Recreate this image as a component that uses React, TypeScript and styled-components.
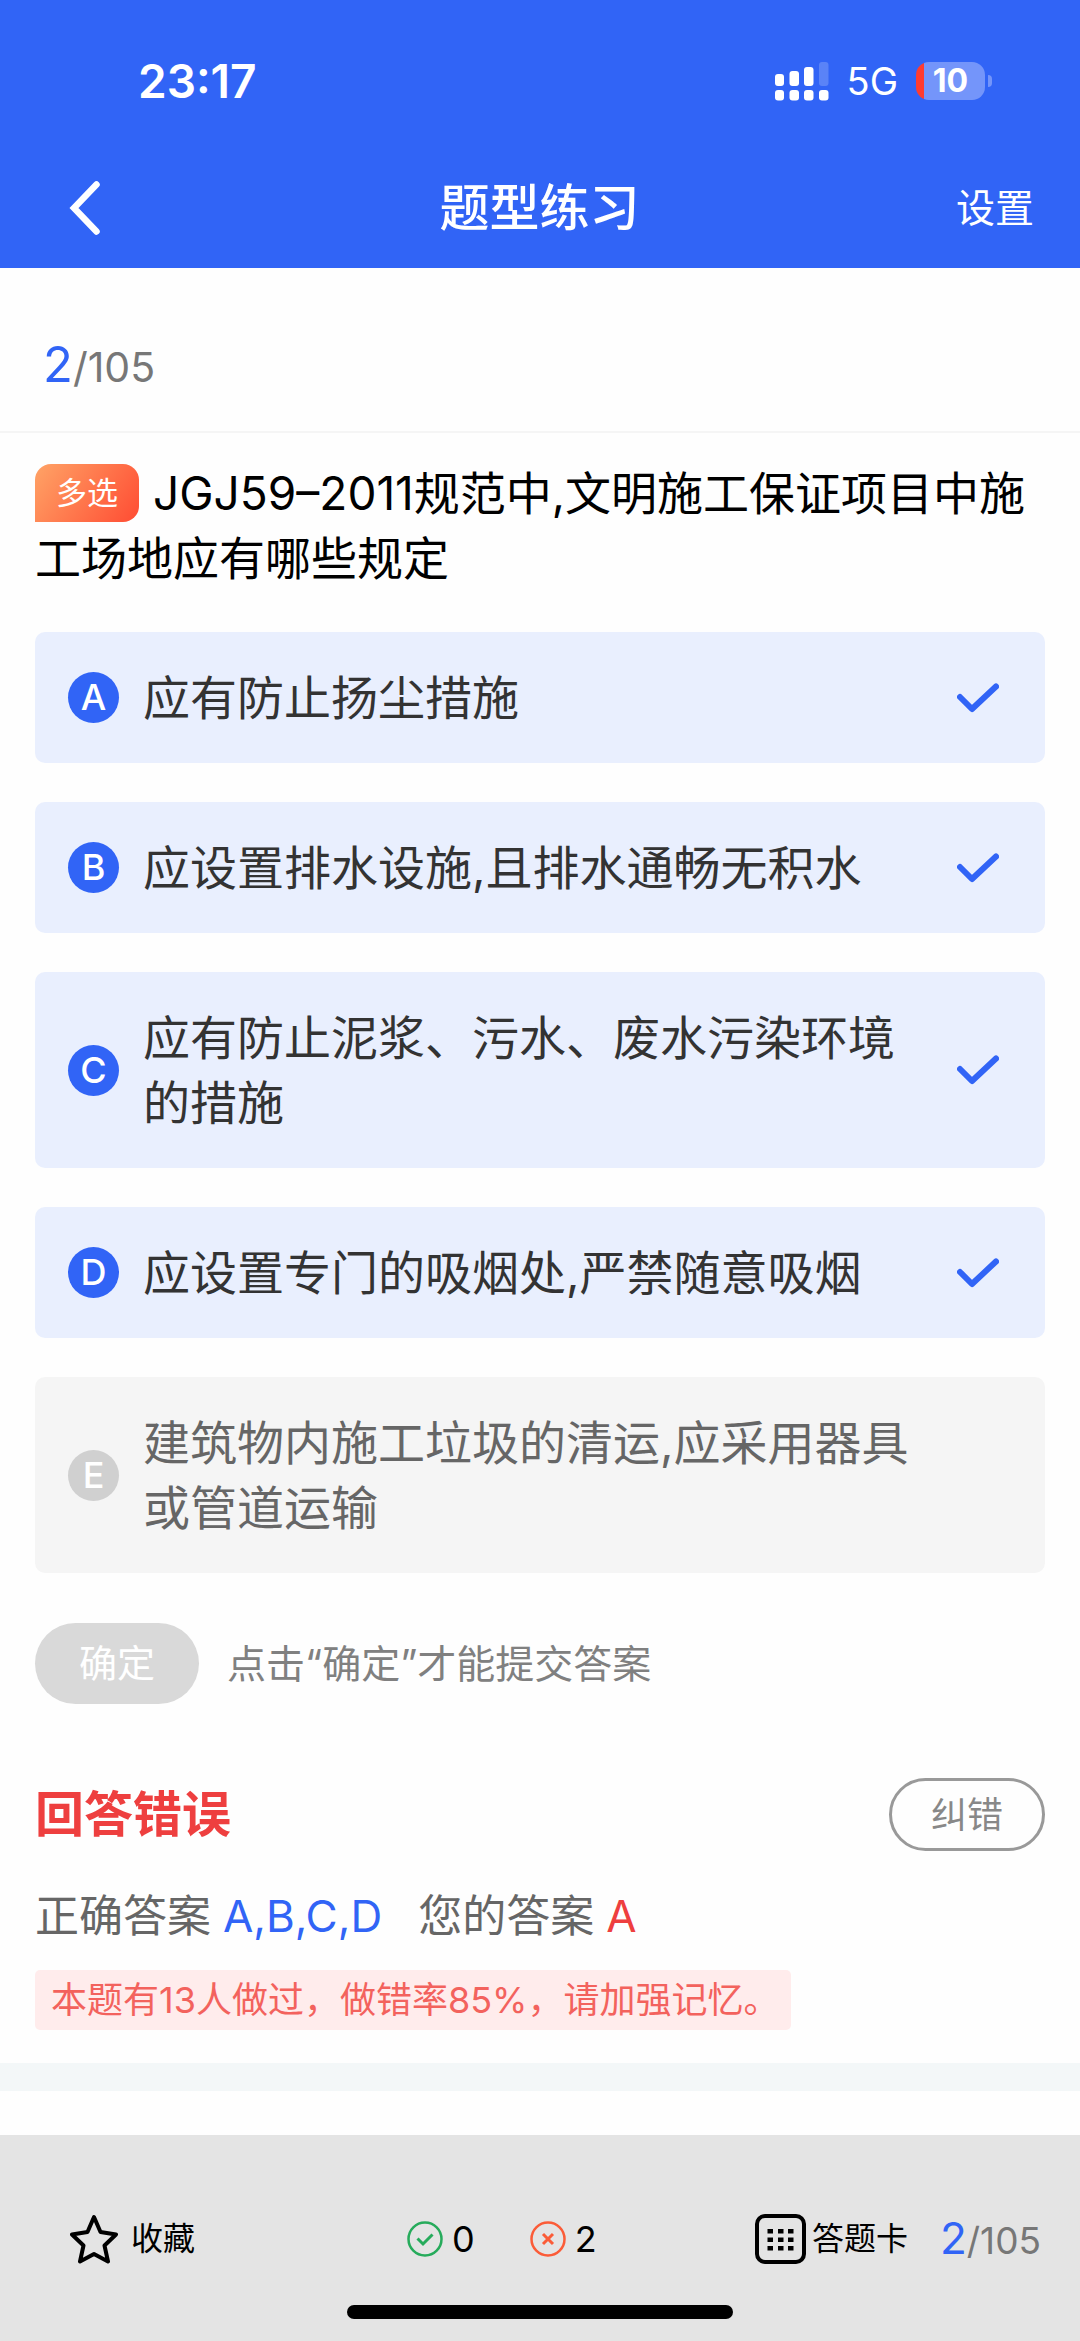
import React, { useState } from "react";
import styled, { createGlobalStyle } from "styled-components";

const sans = 'Inter, "Noto Sans CJK SC", sans-serif';
const blue = "#3164f6";

const GlobalStyle = createGlobalStyle`
  * { box-sizing: border-box; }
  body { margin: 0; background: #fefefe; font-family: ${sans}; color: #000; }
  button { margin: 0; padding: 0; border: 0; background: none; font: inherit; color: inherit; }
  h1, h2, p { margin: 0; font-weight: 400; }
  svg { display: block; flex: none; }
`;

const Screen = styled.div`
  min-height: 100vh;
  display: flex;
  flex-direction: column;
`;

const Header = styled.header`
  background: ${blue};
  color: #fff;
`;

const StatusBar = styled.div`
  height: 160px;
  padding: 2px 88px 0 138px;
  display: flex;
  align-items: center;
  justify-content: space-between;
`;

const Clock = styled.time`
  font-size: 46px;
  font-weight: 600;
  line-height: 56px;
`;

const StatusIcons = styled.div`
  display: flex;
  align-items: center;
  gap: 18px;
`;

const Network = styled.span`
  font-size: 38px;
  line-height: 46px;
`;

const BatteryWrap = styled.div`
  display: flex;
  align-items: center;
  gap: 3px;
`;

const Battery = styled.div`
  width: 69px;
  height: 38px;
  border-radius: 13px;
  background: linear-gradient(to right, #ff3b30 8px, #7495fa 8px);
  text-align: center;
  font-size: 32px;
  font-weight: 700;
  line-height: 38px;
`;

const BatteryTip = styled.div`
  width: 4px;
  height: 12px;
  border-radius: 0 4px 4px 0;
  background: #7495fa;
`;

const NavBar = styled.nav`
  height: 108px;
  padding: 0 46px 12px 69px;
  display: grid;
  grid-template-columns: 1fr auto 1fr;
  align-items: center;
`;

const BackButton = styled.button`
  justify-self: start;
`;

const Title = styled.h1`
  margin-right: 24px;
  font-size: 50px;
  font-weight: 500;
  line-height: 70px;
`;

const SettingsButton = styled.button`
  justify-self: end;
  font-size: 39px;
  line-height: 60px;
`;

const Main = styled.main`
  flex: 1;
`;

const ProgressBar = styled.div`
  height: 165px;
  padding: 32px 43px 0;
  display: flex;
  align-items: center;
  border-bottom: 2px solid #f5f5f5;
`;

const Progress = styled.span<{ $size: number }>`
  color: #777;
  font-size: ${(p) => p.$size}px;
  line-height: 60px;
  white-space: nowrap;
`;

const Current = styled.span<{ $size: number }>`
  color: ${blue};
  font-size: ${(p) => p.$size}px;
`;

const Content = styled.section`
  padding: 28px 35px 33px;
`;

const Question = styled.h2`
  font-size: 46px;
  line-height: 65px;
`;

const TypeBadge = styled.span`
  display: inline-block;
  height: 58px;
  margin: 3px 14px 0 0;
  padding: 0 21px;
  vertical-align: top;
  border-radius: 16px 16px 16px 0;
  background: linear-gradient(125deg, #ffa366, #ff4c33);
  color: #fff;
  font-size: 31px;
  line-height: 58px;
`;

const OptionList = styled.div`
  margin-top: 41px;
  display: flex;
  flex-direction: column;
  gap: 39px;
`;

const Option = styled.label<{ $on: boolean }>`
  padding: 33px 46px 33px 33px;
  display: flex;
  align-items: center;
  border-radius: 10px;
  background: ${(p) => (p.$on ? "#e9effe" : "#f5f5f5")};
  color: ${(p) => (p.$on ? "#333" : "#666")};
`;

const HiddenCheck = styled.input`
  position: absolute;
  width: 1px;
  height: 1px;
  margin: 0;
  opacity: 0;
`;

const Letter = styled.span<{ $on: boolean }>`
  flex: none;
  width: 51px;
  height: 51px;
  margin-right: 24px;
  border-radius: 50%;
  background: ${(p) => (p.$on ? blue : "#d0d0d0")};
  color: #fff;
  font-size: 36px;
  font-weight: 500;
  line-height: 51px;
  text-align: center;
`;

const OptionText = styled.span`
  flex: 1;
  padding-right: 24px;
  font-size: 47px;
  line-height: 65px;
`;

const CheckSlot = styled.span`
  flex: none;
  width: 42px;
`;

const SubmitRow = styled.div`
  margin-top: 50px;
  display: flex;
  align-items: center;
  gap: 28px;
`;

const SubmitButton = styled.button`
  width: 164px;
  height: 81px;
  border-radius: 41px;
  background: #d9d9d9;
  color: #fff;
  font-size: 38px;
  line-height: 81px;
`;

const Hint = styled.p`
  color: #808080;
  font-size: 39px;
  line-height: 60px;
`;

const ResultRow = styled.div`
  margin-top: 74px;
  display: flex;
  align-items: center;
  justify-content: space-between;
`;

const ResultTitle = styled.h2`
  color: #ee3f3f;
  font-size: 49px;
  font-weight: 700;
  line-height: 70px;
`;

const ReportButton = styled.button`
  width: 156px;
  height: 73px;
  border: 3px solid #999;
  border-radius: 37px;
  color: #888;
  font-size: 36px;
  line-height: 60px;
`;

const AnswerRow = styled.div`
  margin-top: 33px;
  display: flex;
  gap: 36px;
  color: #666;
  font-size: 44px;
  line-height: 65px;
`;

const Answer = styled.span<{ $color: string }>`
  margin-left: 12px;
  color: ${(p) => p.$color};
`;

const Notice = styled.p`
  display: table;
  margin-top: 21px;
  padding: 0 12px 0 16px;
  border-radius: 5px;
  background: #ffecec;
  color: #f3625d;
  font-size: 36px;
  line-height: 60px;
`;

const Band = styled.div`
  height: 28px;
  margin-bottom: 44px;
  background: #f3f7f8;
`;

const Footer = styled.footer`
  padding: 72px 0 22px;
  background: #e4e4e4;
`;

const Toolbar = styled.div`
  height: 64px;
  padding: 0 39px 0 70px;
  display: flex;
  align-items: center;
  justify-content: space-between;
  font-size: 32px;
`;

const ToolGroup = styled.div<{ $gap: number }>`
  display: flex;
  align-items: center;
  gap: ${(p) => p.$gap}px;
`;

const ToolButton = styled.button<{ $gap: number; $minWidth?: number }>`
  min-width: ${(p) => p.$minWidth ?? 0}px;
  display: flex;
  align-items: center;
  gap: ${(p) => p.$gap}px;
  line-height: 48px;
`;

const Count = styled.span`
  display: flex;
  align-items: center;
  gap: 9px;
  font-size: 36px;
  line-height: 48px;
`;

const HomeIndicator = styled.div`
  width: 386px;
  height: 14px;
  margin: 34px auto 0;
  border-radius: 7px;
  background: #000;
`;

const SignalIcon = () => (
  <svg width="54" height="39" viewBox="0 0 54 39" fill="#fff" aria-hidden="true">
    <rect x="0" y="12" width="9" height="12" rx="3" />
    <rect x="14.500" y="9" width="9.500" height="15" rx="3" />
    <rect x="29" y="5" width="9.500" height="19" rx="3" />
    <rect x="44" y="0" width="9.500" height="24" rx="3" opacity="0.2" />
    <rect x="0" y="28" width="9" height="10.500" rx="3" />
    <rect x="14.500" y="28" width="9.500" height="10.500" rx="3" />
    <rect x="29" y="28" width="9.500" height="10.500" rx="3" />
    <rect x="44" y="28" width="9.500" height="10.500" rx="3" />
  </svg>
);

const BackIcon = () => (
  <svg width="32" height="56" viewBox="0 0 32 56" fill="none" stroke="#fff" strokeWidth="6.500" strokeLinecap="round" aria-hidden="true">
    <path d="M27.500 4.500 5 28 27.500 51.500" />
  </svg>
);

const CheckIcon = () => (
  <svg width="42" height="30" viewBox="0 0 42 30" fill="none" stroke={blue} strokeWidth="6" strokeLinecap="round" strokeLinejoin="round" aria-hidden="true">
    <path d="M3 14 15 26 39 3.500" />
  </svg>
);

const StarIcon = () => (
  <svg width="48" height="50" viewBox="0 0 48 50" fill="none" stroke="#000" strokeWidth="4" strokeLinejoin="round" aria-hidden="true">
    <path d="M24 3 30.500 18 46 20.500 34.500 31.500 38 47.500 24 40 10 47.500 13.500 31.500 2 20.500 17.500 18Z" />
  </svg>
);

const RightIcon = () => (
  <svg width="36" height="36" viewBox="0 0 36 36" fill="none" stroke="#26ab5b" strokeWidth="2.500" aria-hidden="true">
    <circle cx="18" cy="18" r="16.500" />
    <path d="M10.500 17.500 16 23 25.500 13.500" strokeWidth="3" />
  </svg>
);

const WrongIcon = () => (
  <svg width="36" height="36" viewBox="0 0 36 36" fill="none" stroke="#fb5c38" strokeWidth="2.500" aria-hidden="true">
    <circle cx="18" cy="18" r="16.500" />
    <path d="M13 13 23 23M23 13 13 23" strokeWidth="3" />
  </svg>
);

const CardIcon = () => (
  <svg width="51" height="50" viewBox="0 0 51 50" aria-hidden="true">
    <rect x="2" y="2" width="47" height="46" rx="8" fill="none" stroke="#000" strokeWidth="4" />
    {[15, 23.5, 32].map((y) =>
      [12.5, 23, 33].map((x) => <rect key={`${x}-${y}`} x={x} y={y} width="5.500" height="4.500" />)
    )}
  </svg>
);

const options = [
  { letter: "A", text: "应有防止扬尘措施" },
  { letter: "B", text: "应设置排水设施,且排水通畅无积水" },
  { letter: "C", text: "应有防止泥浆、污水、废水污染环境的措施" },
  { letter: "D", text: "应设置专门的吸烟处,严禁随意吸烟" },
  { letter: "E", text: "建筑物内施工垃圾的清运,应采用器具或管道运输" },
];

export default function App() {
  const [picked, setPicked] = useState(["A", "B", "C", "D"]);
  const toggle = (letter: string) =>
    setPicked((list) => (list.includes(letter) ? list.filter((l) => l !== letter) : [...list, letter]));

  return (
    <>
      <GlobalStyle />
      <Screen>
        <Header>
          <StatusBar>
            <Clock>23:17</Clock>
            <StatusIcons>
              <SignalIcon />
              <Network>5G</Network>
              <BatteryWrap>
                <Battery>10</Battery>
                <BatteryTip />
              </BatteryWrap>
            </StatusIcons>
          </StatusBar>
          <NavBar>
            <BackButton type="button" aria-label="返回">
              <BackIcon />
            </BackButton>
            <Title>题型练习</Title>
            <SettingsButton type="button">设置</SettingsButton>
          </NavBar>
        </Header>

        <Main>
          <ProgressBar>
            <Progress $size={41}>
              <Current $size={49}>2</Current>/105
            </Progress>
          </ProgressBar>

          <Content>
            <Question>
              <TypeBadge>多选</TypeBadge>
              JGJ59–2011规范中,文明施工保证项目中施工场地应有哪些规定
            </Question>

            <OptionList>
              {options.map(({ letter, text }) => {
                const on = picked.includes(letter);
                return (
                  <Option key={letter} $on={on}>
                    <HiddenCheck type="checkbox" checked={on} onChange={() => toggle(letter)} />
                    <Letter $on={on}>{letter}</Letter>
                    <OptionText>{text}</OptionText>
                    <CheckSlot>{on && <CheckIcon />}</CheckSlot>
                  </Option>
                );
              })}
            </OptionList>

            <SubmitRow>
              <SubmitButton type="button">确定</SubmitButton>
              <Hint>点击“确定”才能提交答案</Hint>
            </SubmitRow>

            <ResultRow>
              <ResultTitle>回答错误</ResultTitle>
              <ReportButton type="button">纠错</ReportButton>
            </ResultRow>
            <AnswerRow>
              <span>
                正确答案<Answer $color={blue}>A,B,C,D</Answer>
              </span>
              <span>
                您的答案<Answer $color="#ee3f3f">A</Answer>
              </span>
            </AnswerRow>
            <Notice>本题有13人做过，做错率85%，请加强记忆。</Notice>
          </Content>
          <Band />
        </Main>

        <Footer>
          <Toolbar>
            <ToolButton type="button" $gap={13} $minWidth={179}>
              <StarIcon />
              收藏
            </ToolButton>
            <ToolGroup $gap={55}>
              <Count>
                <RightIcon />0
              </Count>
              <Count>
                <WrongIcon />2
              </Count>
            </ToolGroup>
            <ToolGroup $gap={32}>
              <ToolButton type="button" $gap={6}>
                <CardIcon />
                答题卡
              </ToolButton>
              <Progress $size={37}>
                <Current $size={44}>2</Current>/105
              </Progress>
            </ToolGroup>
          </Toolbar>
          <HomeIndicator />
        </Footer>
      </Screen>
    </>
  );
}
